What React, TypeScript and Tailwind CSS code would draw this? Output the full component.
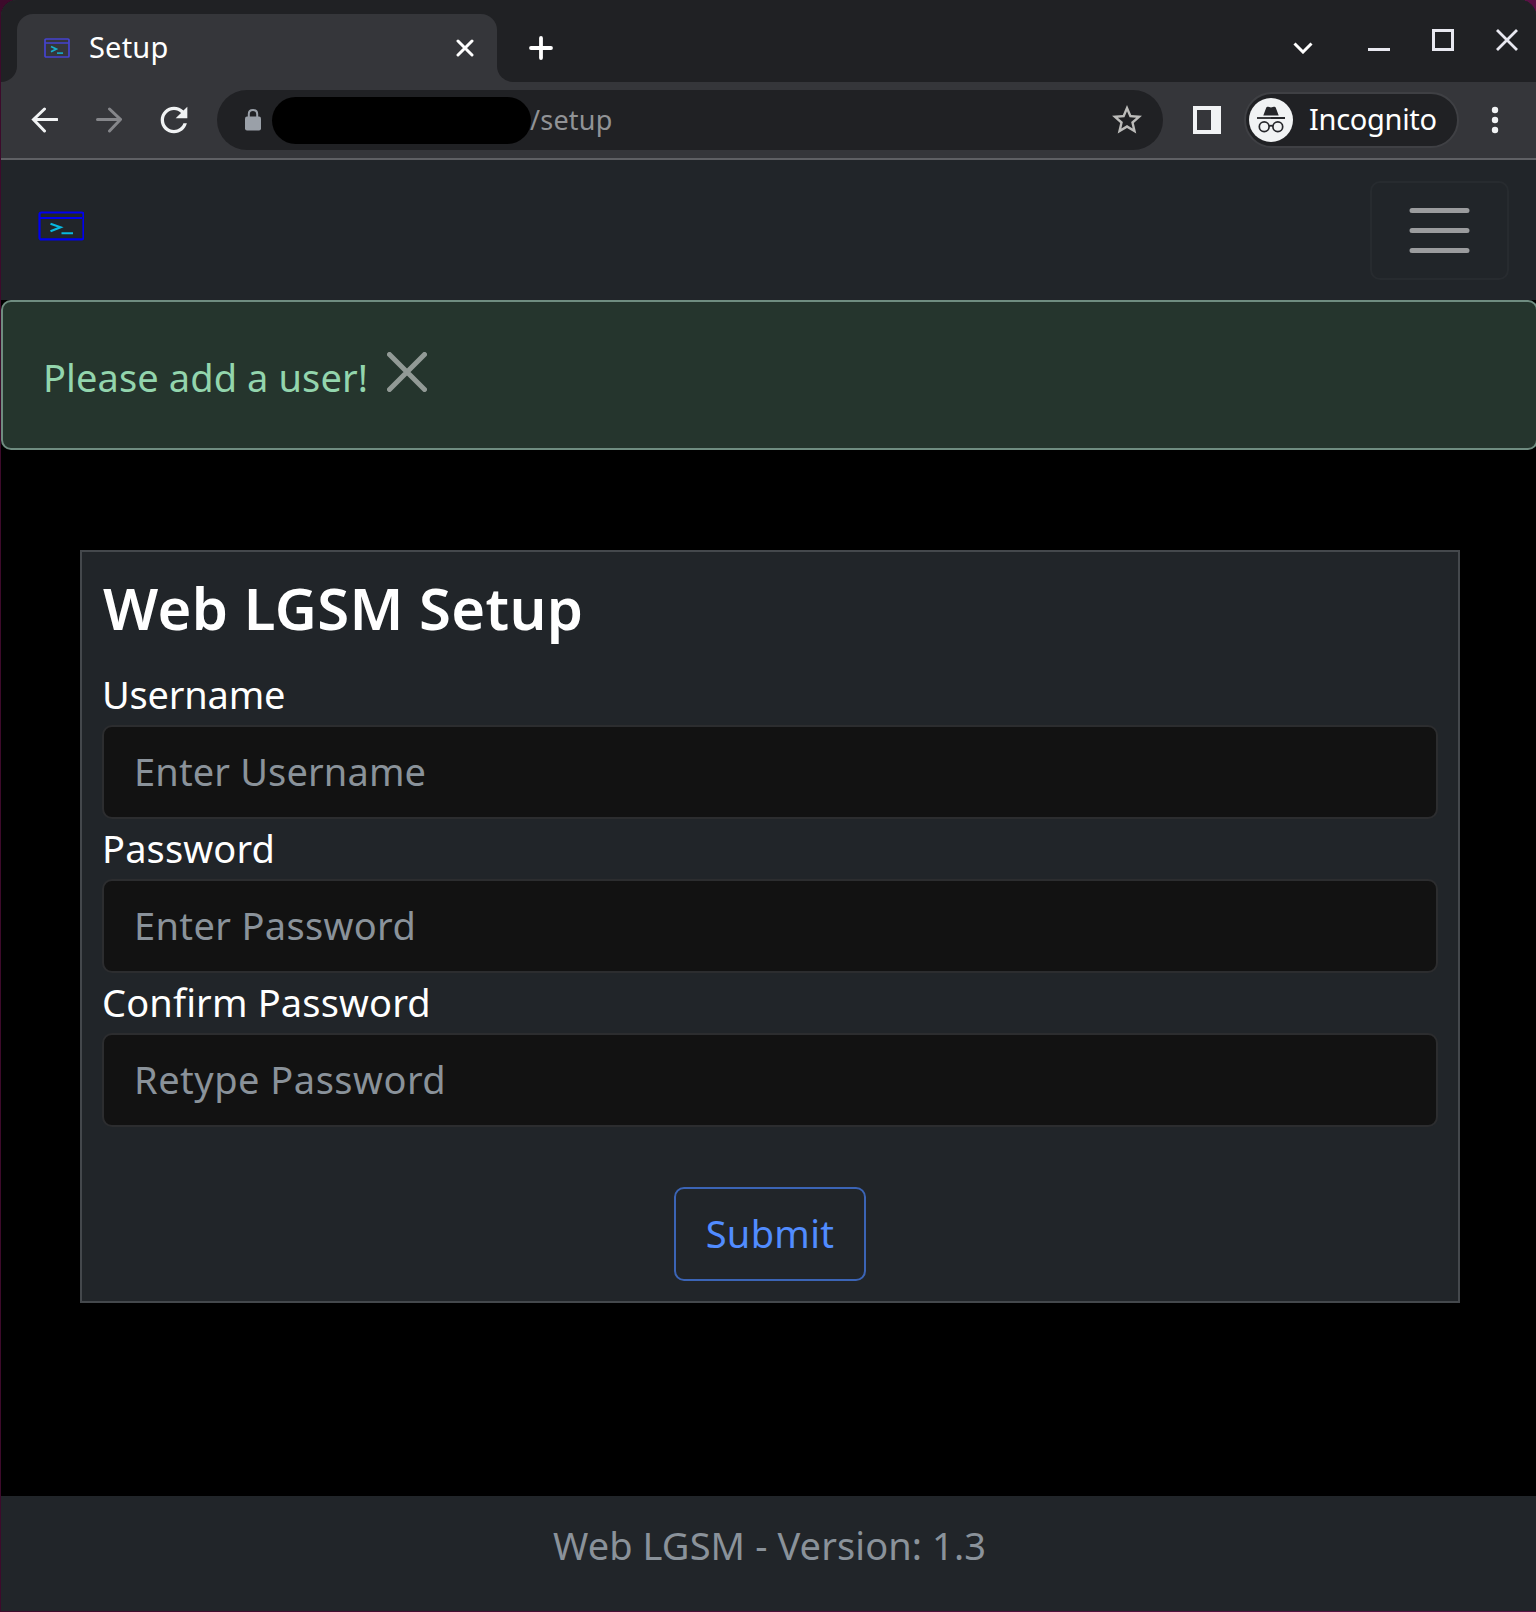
import React from "react";

type LogoProps = { className: string };

function TabLogo({ className }: LogoProps) {
  return (
    <svg className={className} viewBox="0 0 26 20" fill="none">
      <rect x="1" y="1" width="24" height="18" rx="1" stroke="#4543d0" strokeWidth="1.7" />
      <path d="M1 5H25" stroke="#4543d0" strokeWidth="1.4" />
      <path d="M7 8.5L12.3 11L7 13.8" stroke="#17aecb" strokeWidth="1.8" />
      <path d="M13 15.2H19" stroke="#17a3bd" strokeWidth="1.8" />
    </svg>
  );
}

function BrandLogo({ className }: LogoProps) {
  return (
    <svg className={className} viewBox="0 0 46 30" fill="none">
      <rect x="1.500" y="1.500" width="44" height="26.900" rx="2" stroke="#0000f0" strokeWidth="2.200" />
      <path d="M2 7H44" stroke="#0000f0" strokeWidth="1.8" />
      <path d="M12.500 12.800L22.500 16.300L12.500 20.300" stroke="#08b9e0" strokeWidth="2.200" />
      <path d="M23.500 22.300H35" stroke="#08b9e0" strokeWidth="2" />
    </svg>
  );
}

function TabStrip() {
  return (
    <div className="flex h-[82px] bg-[#202124]">
      <div className="flex w-4 items-end bg-[#35363a]">
        <div className="h-full w-full rounded-br-[16px] bg-[#202124]" />
      </div>
      <div className="flex h-full w-[480px] shrink-0 flex-col pt-[14px]">
        <div className="flex flex-1 items-center rounded-t-[16px] bg-[#35363a] pl-[27px] pr-[23px]">
          <TabLogo className="-mt-[1px] h-5 w-[26px]" />
          <span className="ml-[19px] -mt-[2px] text-[29px] leading-[40px] tracking-[0.2px] text-white">Setup</span>
          <svg className="-mt-[1px] ml-auto h-[18px] w-[18px]" viewBox="0 0 18 18" stroke="#fff" strokeWidth="3" strokeLinecap="round">
            <path d="M2 2L16 16M16 2L2 16" />
          </svg>
        </div>
      </div>
      <div className="flex flex-1 bg-[#35363a]">
        <div className="flex flex-1 rounded-bl-[16px] bg-[#202124] pl-8 pt-[36px]">
          <svg className="h-6 w-6" viewBox="0 0 24 24" stroke="#fff" strokeWidth="3.8" strokeLinecap="round">
            <path d="M2 12H22M12 2V22" />
          </svg>
          <div className="-mt-[10px] mr-[18px] ml-auto flex items-start">
            <svg className="mt-[16px] h-[12px] w-[20px]" viewBox="0 0 20 12" fill="none" stroke="#fff" strokeWidth="3">
              <path d="M1.5 1.5L10 10L18.500 1.5" />
            </svg>
            <div className="mt-[22px] ml-[55px] h-[3px] w-[22px] bg-[#e8e8f0]" />
            <div className="mt-[3px] ml-[42px] h-[22px] w-[22px] border-[3px] border-[#e8e8f0]" />
            <svg className="mt-[3px] ml-[42px] h-[22px] w-[22px]" viewBox="0 0 22 22" stroke="#e8e8f0" strokeWidth="2.8">
              <path d="M1 1L21 21M21 1L1 21" />
            </svg>
          </div>
        </div>
      </div>
    </div>
  );
}

function IncognitoAvatar() {
  return (
    <svg className="h-11 w-11" viewBox="0 0 44 44" fill="none">
      <circle cx="22" cy="22" r="22" fill="#f1f3f4" />
      <path d="M14.300 17.500L17.300 9.500Q17.900 8.300 19.200 8.800L22 9.600L24.800 8.800Q26.100 8.300 26.700 9.500L29.700 17.500Z" fill="#26272b" />
      <path d="M8 20H36" stroke="#26272b" strokeWidth="1.8" />
      <circle cx="15.200" cy="28.800" r="4.900" stroke="#26272b" strokeWidth="1.7" />
      <circle cx="28.800" cy="28.800" r="4.900" stroke="#26272b" strokeWidth="1.7" />
      <path d="M20 28.300Q22 27 24 28.300" stroke="#26272b" strokeWidth="1.7" />
    </svg>
  );
}

function Toolbar() {
  return (
    <div className="flex h-[78px] items-center border-b-2 border-[#5f6064] bg-[#35363a] pl-[30px]">
      <svg className="h-[26px] w-[27px] shrink-0" viewBox="0 0 27 26" fill="none" stroke="#f1f3f4" strokeWidth="3" strokeLinecap="round">
        <path d="M13.500 2L2.500 12.500L13.500 24M3 12.500H26" />
      </svg>
      <svg className="ml-[37px] h-[26px] w-[27px] shrink-0" viewBox="0 0 27 26" fill="none" stroke="#85868a" strokeWidth="3" strokeLinecap="round">
        <path d="M14.500 2L25.500 12.500L14.500 24M25 12.500H2.500" />
      </svg>
      <svg className="ml-[31.500px] h-10 w-10 shrink-0" viewBox="0 0 24 24" fill="#f1f3f4">
        <path d="M17.650 6.350C16.200 4.900 14.210 4 12 4c-4.420 0-7.990 3.580-7.990 8s3.570 8 7.990 8c3.730 0 6.840-2.550 7.730-6h-2.080c-.82 2.330-3.040 4-5.650 4-3.310 0-6-2.690-6-6s2.690-6 6-6c1.660 0 3.140.69 4.220 1.780L13 11h7V4l-2.350 2.350z" />
      </svg>
      <div className="ml-[23.500px] flex h-[60px] w-[946px] shrink-0 items-center rounded-full bg-[#202124] pr-[18px] pl-7">
        <svg className="h-[22px] w-4 shrink-0" viewBox="0 0 16 22" fill="none">
          <rect x="0" y="7.500" width="16" height="14" rx="2" fill="#9aa0a8" />
          <path d="M3.800 8V5Q3.800 1 8 1Q12.200 1 12.200 5V8" stroke="#9aa0a8" strokeWidth="2" />
        </svg>
        <div className="ml-[11px] h-[47px] w-[259px] rounded-full bg-black" />
        <span className="-mt-px -ml-px text-[27px] leading-[40px] tracking-[0.2px] text-[#919396]">/setup</span>
        <svg className="ml-auto h-9 w-9" viewBox="0 0 24 24" fill="#bcbcba">
          <path d="M22 9.240l-7.190-.62L12 2 9.190 8.630 2 9.240l5.460 4.730L5.820 21 12 17.270 18.180 21l-1.630-7.030L22 9.240zM12 15.400l-3.760 2.270 1-4.280-3.320-2.880 4.380-.38L12 6.100l1.710 4.040 4.380.38-3.320 2.880 1 4.280L12 15.400z" />
        </svg>
      </div>
      <div className="ml-[30px] h-7 w-7 shrink-0 border-4 border-r-[10px] border-[#f1f3f4]" />
      <div className="ml-[23px] flex h-[56px] w-[215px] shrink-0 items-center rounded-full border-2 border-[#3f4044] bg-[#202124] pl-[3px]">
        <IncognitoAvatar />
        <span className="ml-[16px] -mt-[2px] text-[29px] leading-[40px] tracking-[-0.3px] text-white">Incognito</span>
      </div>
      <svg className="ml-[32px] h-7 w-2 shrink-0" viewBox="0 0 8 28" fill="#f1f3f4">
        <circle cx="4" cy="4" r="3.200" />
        <circle cx="4" cy="14" r="3.200" />
        <circle cx="4" cy="24" r="3.200" />
      </svg>
    </div>
  );
}

function Navbar() {
  return (
    <nav className="flex h-[140px] items-start justify-between bg-[#212529] pr-[27px] pl-[37px]">
      <BrandLogo className="mt-[51px] h-[30px] w-[46px]" />
      <button className="mt-[21px] flex h-[99px] w-[139px] items-center justify-center rounded-[10px] border-2 border-[#272b2f]">
        <svg className="h-[60px] w-[62px]" viewBox="0 0 62 60" stroke="#9b9c9e" strokeWidth="5" strokeLinecap="round">
          <path d="M3 9.500H58M3 29.500H58M3 49.500H58" />
        </svg>
      </button>
    </nav>
  );
}

function Alert() {
  return (
    <div className="-mr-[2px] flex h-[150px] items-start rounded-[10px] border-2 border-[#6f8c80] bg-[#25352d] pl-10">
      <span className="mt-[45px] text-[38px] leading-[60px] tracking-[0.1px] text-[#93d5ad]">Please add a user!</span>
      <svg className="mt-[50px] ml-[19px] h-10 w-10" viewBox="0 0 40 40" stroke="#929a96" strokeWidth="5" strokeLinecap="round">
        <path d="M2.500 2.500L37.500 37.500M37.500 2.500L2.500 37.500" />
      </svg>
    </div>
  );
}

type FieldProps = {
  label: string;
  placeholder: string;
  labelClass: string;
  inputClass: string;
};

function Field({ label, placeholder, labelClass, inputClass }: FieldProps) {
  return (
    <label className="block">
      <span className={"block h-[60px] text-[38px] leading-[58px] text-white " + labelClass}>{label}</span>
      <input
        className={
          "block h-[94px] w-full rounded-[10px] border-2 border-[#2c2d2f] bg-[#121212] px-[30px] pb-[2px] text-[38px] text-[#8a929a] outline-none placeholder:text-[#8a929a] " +
          inputClass
        }
        placeholder={placeholder}
      />
    </label>
  );
}

export default function App() {
  return (
    <div className="h-[1612px] w-[1536px] overflow-hidden bg-gradient-to-r from-[#3d0a2b] to-[#5a1245] pl-px font-['Noto_Sans',sans-serif]">
      <div className="flex h-[1611px] flex-col overflow-hidden rounded-t-[16px] bg-black">
        <TabStrip />
        <Toolbar />
        <Navbar />
        <Alert />
        <main className="flex-1 pt-[100px] pl-[79px]">
          <form className="h-[753px] w-[1380px] border-2 border-[#44484c] bg-[#212529] px-5 pt-5">
            <h1 className="mb-[21px] pl-px text-[58px] leading-[72px] font-semibold tracking-[0.35px] text-white">Web LGSM Setup</h1>
            <Field label="Username" placeholder="Enter Username" labelClass="tracking-[-0.2px]" inputClass="tracking-[0.14px]" />
            <Field label="Password" placeholder="Enter Password" labelClass="tracking-[0.15px]" inputClass="tracking-[0.35px]" />
            <Field label="Confirm Password" placeholder="Retype Password" labelClass="tracking-[0.15px]" inputClass="tracking-[0.5px]" />
            <div className="mt-[60px] flex justify-center">
              <button
                type="button"
                className="h-[94px] w-[192px] rounded-[10px] border-2 border-[#3b64b5] pb-[2px] text-[38px] leading-[60px] tracking-[0.3px] text-[#518cff]"
              >
                Submit
              </button>
            </div>
          </form>
        </main>
        <footer className="h-[115px] bg-[#212529] pt-[19px] pl-[2px] text-center text-[38px] leading-[60px] tracking-[0.1px] text-[#8a929a]">
          Web LGSM - Version: 1.3
        </footer>
      </div>
    </div>
  );
}
